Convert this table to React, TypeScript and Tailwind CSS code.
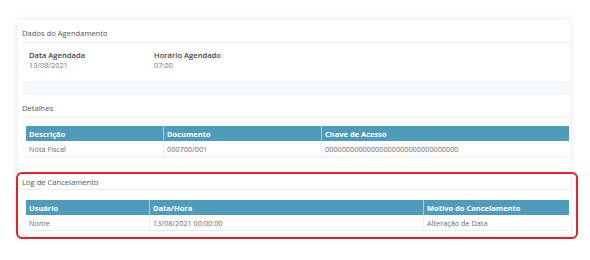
import React from "react";

const font = { fontFamily: '"Open Sans", "Noto Sans", sans-serif' };

function Table({
  cols,
  widths,
  row,
  mt,
}: {
  cols: string[];
  widths: string[];
  row: string[];
  mt: string;
}) {
  return (
    <div className={`${mt} ml-[4px] mr-[1px]`}>
      <div className="flex h-[15px] bg-[#4f9bbb]">
        {cols.map((c, i) => (
          <div
            key={c}
            className={`${widths[i]} ${i > 0 ? "border-l border-[#a6cddd]" : ""} flex items-center pl-[3px] text-[7.5px] font-bold text-white leading-[10px]`}
          >
            {c}
          </div>
        ))}
      </div>
      <div className="flex h-[16px] border-b border-[#ececec]">
        {row.map((c, i) => (
          <div
            key={i}
            className={`${widths[i]} ${i > 0 ? "border-l border-[#ececec]" : ""} flex items-center pl-[3px] text-[7.3px] text-[#6a6a6a] leading-[10px]`}
          >
            {c}
          </div>
        ))}
      </div>
    </div>
  );
}

export default function App() {
  return (
    <div className="relative w-[590px] h-[260px] bg-white overflow-hidden" style={font}>
      <div className="ml-[18px] mt-[20px] w-[552px] h-[216px] bg-white shadow-[0_0_8px_rgba(0,0,0,0.10)]">
        <div className="ml-[4px]">
          <div className="pt-[8px] pb-[4px] border-b border-[#ececec] text-[7.6px] leading-[10px] text-[#555]">
            Dados do Agendamento
          </div>
          <div className="flex pt-[7px] pb-[11px] pl-[7px] text-[7.6px] leading-[10px]">
            <div className="w-[125px]">
              <div className="font-semibold text-[#444]">Data Agendada</div>
              <div className="text-[#777] text-[7.3px]">13/08/2021</div>
            </div>
            <div>
              <div className="font-semibold text-[#444]">Horário Agendado</div>
              <div className="text-[#777] text-[7.3px]">07:00</div>
            </div>
          </div>
          <div className="h-[14px] bg-[#f6f7f9]" />
          <div className="pt-[8px] pb-[3px] border-b border-[#ececec] text-[7.6px] leading-[10px] text-[#555]">
            Detalhes
          </div>
          <Table
            mt="mt-[9px]"
            cols={["Descrição", "Documento", "Chave de Acesso"]}
            widths={["w-[137px]", "w-[158px]", "flex-1"]}
            row={["Nota Fiscal", "000700/001", "00000000000000000000000000000000"]}
          />
          <div className="pt-[20px] pb-[2px] border-b border-[#ececec] text-[7.6px] leading-[10px] text-[#555]">
            Log de Cancelamento
          </div>
          <Table
            mt="mt-[10px]"
            cols={["Usuário", "Data/Hora", "Motivo do Cancelamento"]}
            widths={["w-[123px]", "w-[274px]", "flex-1"]}
            row={["Nome", "13/08/2021 00:00:00", "Alteração de Data"]}
          />
        </div>
      </div>
      <div className="absolute left-[16px] top-[172px] w-[562px] h-[67px] border-[2.5px] border-[#e8202a] rounded-[6px]" />
    </div>
  );
}
